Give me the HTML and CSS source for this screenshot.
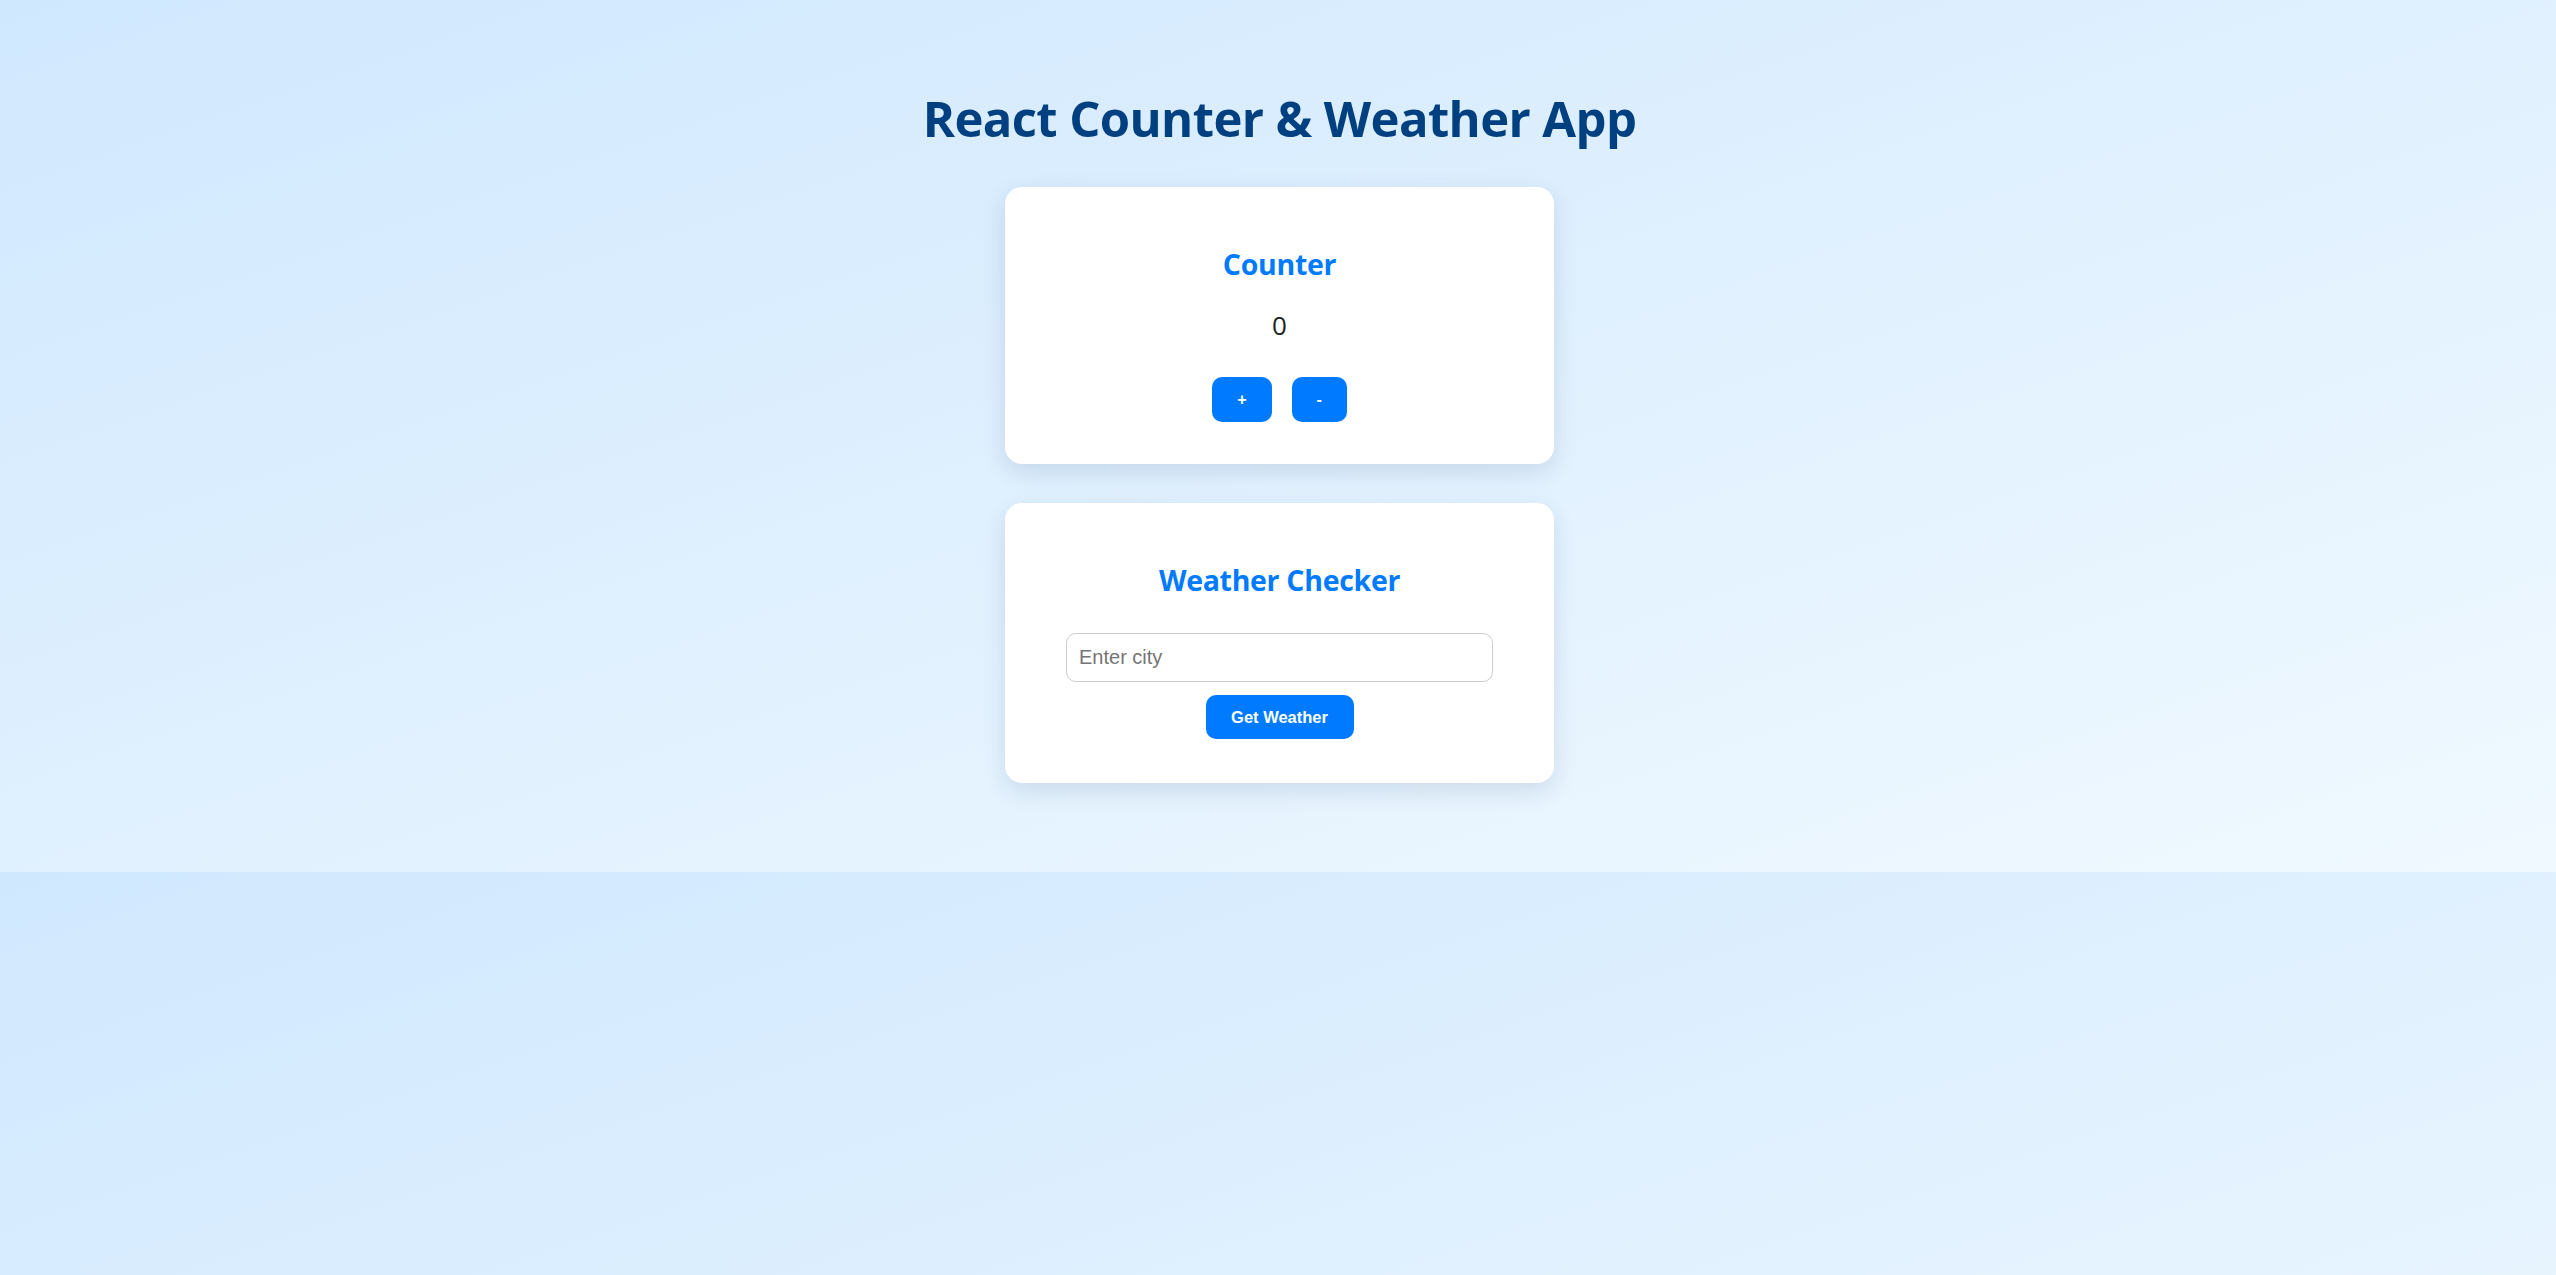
FILE: index.html
```html
<!DOCTYPE html>
<html lang="en">
<head>
<meta charset="utf-8">
<title>React Counter &amp; Weather App</title>
<link rel="stylesheet" href="styles.css">
</head>
<body>
  <div class="app">
    <h1 class="title">React Counter &amp; Weather App</h1>
    <section class="card counter-card">
      <h2 class="card-title">Counter</h2>
      <p class="count">0</p>
      <div class="btn-row">
        <button class="btn btn-small btn-plus">+</button>
        <button class="btn btn-small btn-minus">-</button>
      </div>
    </section>
    <section class="card weather-card">
      <h2 class="card-title">Weather Checker</h2>
      <input class="city-input" type="text" placeholder="Enter city">
      <button class="btn btn-weather">Get Weather</button>
    </section>
  </div>
</body>
</html>
```

FILE: styles.css
```css
body {
  margin: 0;
  background: linear-gradient(to bottom right, #d0e8fe, #f0f9ff);
  font-family: "Open Sans", "Noto Sans", sans-serif;
}

.app {
  display: flex;
  flex-direction: column;
  align-items: center;
  padding: 88px 0 89px 3px;
}

.title {
  margin: 0 0 39px;
  font-size: 49px;
  line-height: 60px;
  font-weight: 700;
  color: #003f80;
  letter-spacing: -0.6px;
}

.card {
  box-sizing: border-box;
  width: 549px;
  background: #ffffff;
  border-radius: 17px;
  box-shadow: 0 8px 24px rgba(0, 40, 90, 0.12);
  display: flex;
  flex-direction: column;
  align-items: center;
  padding: 32px 0 42px;
}

.weather-card {
  margin-top: 39px;
  padding-bottom: 44px;
}

.card-title {
  margin: 26px 0 0;
  font-size: 28.5px;
  line-height: 39px;
  font-weight: 700;
  color: #007bff;
  letter-spacing: -0.3px;
}

.count {
  margin: 25px 0 0;
  font-size: 26px;
  line-height: 32px;
  color: #222;
}

.btn-row {
  display: flex;
  gap: 20px;
  margin-top: 36px;
}

.btn {
  border: none;
  background: #007bff;
  color: #ffffff;
  font-family: "Liberation Sans", Arial, sans-serif;
  font-weight: 700;
  border-radius: 10px;
  cursor: pointer;
}

.btn-small {
  height: 45px;
  padding: 0 25px;
  font-size: 16px;
}

.city-input {
  box-sizing: border-box;
  margin-top: 33px;
  width: 427px;
  height: 49px;
  padding: 0 12px;
  border: 1px solid #cccccc;
  border-radius: 10px;
  font-family: "Liberation Sans", Arial, sans-serif;
  font-size: 20px;
  color: #222;
  outline: none;
}

.city-input::placeholder {
  color: #757575;
}

.btn-weather {
  margin-top: 13px;
  height: 44px;
  width: 148px;
  padding: 0;
  font-size: 16.5px;
}
```
